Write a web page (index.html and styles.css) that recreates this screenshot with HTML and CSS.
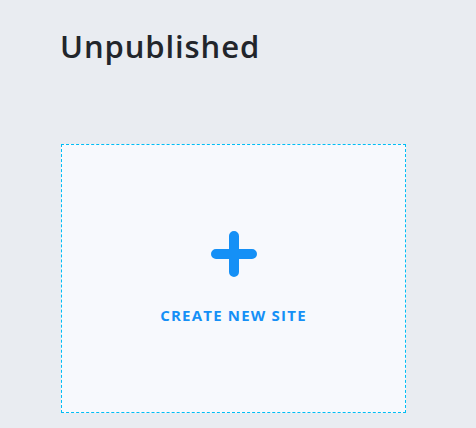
FILE: index.html
```html
<!DOCTYPE html>
<html lang="en">
<head>
    <meta charset="UTF-8">
    <title>Sites</title>
    <link rel="stylesheet" href="styles.css">
</head>
<body>
    <main class="section">
        <h2 class="section-title">Unpublished</h2>
        <div class="site-grid">
            <button class="new-site">
                <svg class="plus" width="46" height="46" viewBox="0 0 46 46" aria-hidden="true">
                    <path d="M23 5 V41 M5 23 H41" stroke="currentColor" stroke-width="10" stroke-linecap="round" fill="none"/>
                </svg>
                <span class="new-site-label">CREATE NEW SITE</span>
            </button>
        </div>
    </main>
</body>
</html>
```

FILE: styles.css
```css
* {
    box-sizing: border-box;
    margin: 0;
    padding: 0;
}

body {
    background: #e9ecf1;
    font-family: "Open Sans", Lato, sans-serif;
    color: #22252b;
}

.section {
    padding: 26px 0 0 60px;
}

.section-title {
    font-size: 31px;
    font-weight: 600;
    line-height: 40px;
    letter-spacing: 0.9px;
}

.site-grid {
    margin-top: 78px;
}

.new-site {
    width: 345px;
    height: 269px;
    background: #f7f9fd;
    border: 1px dashed #00bdf5;
    display: flex;
    flex-direction: column;
    align-items: center;
    padding-top: 86px;
    color: #1590f6;
    cursor: pointer;
    font-family: inherit;
    margin-left: 1px;
}

.plus {
    display: block;
}

.new-site-label {
    margin-top: 28px;
    font-size: 15px;
    font-weight: 700;
    letter-spacing: 1.2px;
}
```
